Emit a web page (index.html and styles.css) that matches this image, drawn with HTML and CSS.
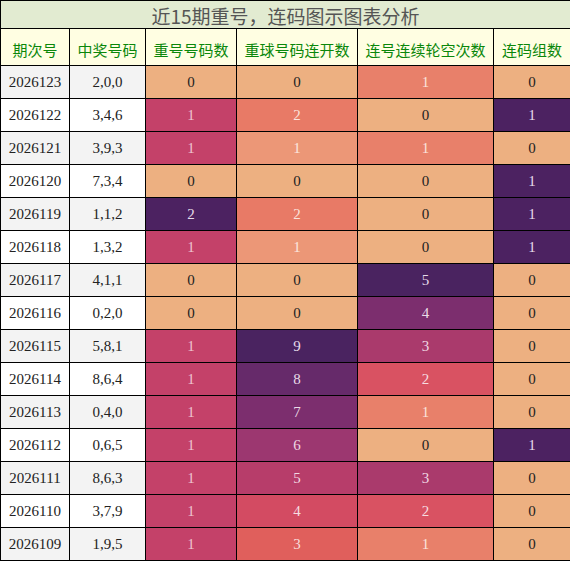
FILE: index.html
```html
<!DOCTYPE html>
<html lang="zh-CN">
<head>
<meta charset="utf-8">
<title>近15期重号，连码图示图表分析</title>
<link rel="stylesheet" href="styles.css">
</head>
<body>
<table class="chart">
  <colgroup>
    <col class="w1"><col class="w2"><col class="w3"><col class="w4"><col class="w5"><col class="w6">
  </colgroup>
  <thead>
    <tr><th colspan="6" class="title">近15期重号，连码图示图表分析</th></tr>
    <tr class="head">
      <th>期次号</th><th>中奖号码</th><th>重号号码数</th><th>重球号码连开数</th><th>连号连续轮空次数</th><th>连码组数</th>
    </tr>
  </thead>
  <tbody>
    <tr class="odd"><td>2026123</td><td>2,0,0</td><td class="peach">0</td><td class="peach">0</td><td class="salmon">1</td><td class="peach">0</td></tr>
    <tr><td>2026122</td><td>3,4,6</td><td class="crimson">1</td><td class="coral">2</td><td class="peach">0</td><td class="plum">1</td></tr>
    <tr class="odd"><td>2026121</td><td>3,9,3</td><td class="crimson">1</td><td class="apricot">1</td><td class="salmon">1</td><td class="peach">0</td></tr>
    <tr><td>2026120</td><td>7,3,4</td><td class="peach">0</td><td class="peach">0</td><td class="peach">0</td><td class="plum">1</td></tr>
    <tr class="odd"><td>2026119</td><td>1,1,2</td><td class="plum">2</td><td class="coral">2</td><td class="peach">0</td><td class="plum">1</td></tr>
    <tr><td>2026118</td><td>1,3,2</td><td class="crimson">1</td><td class="apricot">1</td><td class="peach">0</td><td class="plum">1</td></tr>
    <tr class="odd"><td>2026117</td><td>4,1,1</td><td class="peach">0</td><td class="peach">0</td><td class="v9">5</td><td class="peach">0</td></tr>
    <tr><td>2026116</td><td>0,2,0</td><td class="peach">0</td><td class="peach">0</td><td class="v7">4</td><td class="peach">0</td></tr>
    <tr class="odd"><td>2026115</td><td>5,8,1</td><td class="crimson">1</td><td class="v9">9</td><td class="m3">3</td><td class="peach">0</td></tr>
    <tr><td>2026114</td><td>8,6,4</td><td class="crimson">1</td><td class="v8">8</td><td class="m2">2</td><td class="peach">0</td></tr>
    <tr class="odd"><td>2026113</td><td>0,4,0</td><td class="crimson">1</td><td class="v7">7</td><td class="salmon">1</td><td class="peach">0</td></tr>
    <tr><td>2026112</td><td>0,6,5</td><td class="crimson">1</td><td class="v6">6</td><td class="peach">0</td><td class="plum">1</td></tr>
    <tr class="odd"><td>2026111</td><td>8,6,3</td><td class="crimson">1</td><td class="v5">5</td><td class="m3">3</td><td class="peach">0</td></tr>
    <tr><td>2026110</td><td>3,7,9</td><td class="crimson">1</td><td class="v4">4</td><td class="m2">2</td><td class="peach">0</td></tr>
    <tr class="odd"><td>2026109</td><td>1,9,5</td><td class="crimson">1</td><td class="v3">3</td><td class="salmon">1</td><td class="peach">0</td></tr>
  </tbody>
</table>
</body>
</html>
```

FILE: styles.css
```css
html, body {
  margin: 0;
  padding: 0;
  background: #ffffff;
}

.chart {
  width: 570px;
  table-layout: fixed;
  border-collapse: collapse;
  font-family: "Liberation Serif", "Noto Sans CJK SC", serif;
  font-size: 15px;
  color: #222;
}

.w1 { width: 69px; }
.w2 { width: 76px; }
.w3 { width: 91px; }
.w4 { width: 121px; }
.w5 { width: 136px; }
.w6 { width: 77px; }

.chart th,
.chart td {
  border: 1px solid #000;
  padding: 0;
  text-align: center;
  vertical-align: middle;
  white-space: nowrap;
}

.chart .title {
  height: 28px;
  background: #e2ebd1;
  color: #555;
  font-family: "Noto Sans CJK SC", sans-serif;
  font-weight: normal;
  font-size: 19px;
  line-height: 22px;
  padding-top: 3px;
  box-sizing: border-box;
}

.head th {
  height: 37px;
  background: #fffee2;
  color: #0a870a;
  font-family: "Noto Sans CJK SC", sans-serif;
  font-weight: normal;
  font-size: 15px;
  line-height: 18px;
  padding-top: 5px;
  box-sizing: border-box;
}

.chart td {
  height: 33px;
  background: #ffffff;
  box-sizing: border-box;
}

.chart tr.odd td {
  background: #f3f3f3;
}

.chart tr td.peach { background: #edb081; color: #222; }
.chart tr td.crimson { background: #c44169; color: #eec4cf; }
.chart tr td.plum { background: #4c2261; color: #e6dcea; }
.chart tr td.coral { background: #e87a66; color: #fbe2dc; }
.chart tr td.apricot { background: #ec9777; color: #fbe6de; }
.chart tr td.salmon { background: #e8806a; color: #fbe4dd; }
.chart tr td.m2 { background: #d95262; color: #f6dde0; }
.chart tr td.m3 { background: #aa3a6c; color: #f0d8e2; }
.chart tr td.v3 { background: #e05f5c; color: #f8dcdb; }
.chart tr td.v4 { background: #d34b62; color: #f6dce0; }
.chart tr td.v5 { background: #b73d6a; color: #f2d8e0; }
.chart tr td.v6 { background: #9c3770; color: #eed8e2; }
.chart tr td.v7 { background: #7c2e6e; color: #eadbe7; }
.chart tr td.v8 { background: #662a6a; color: #e8dce8; }
.chart tr td.v9 { background: #4a2360; color: #e6dcea; }
```
